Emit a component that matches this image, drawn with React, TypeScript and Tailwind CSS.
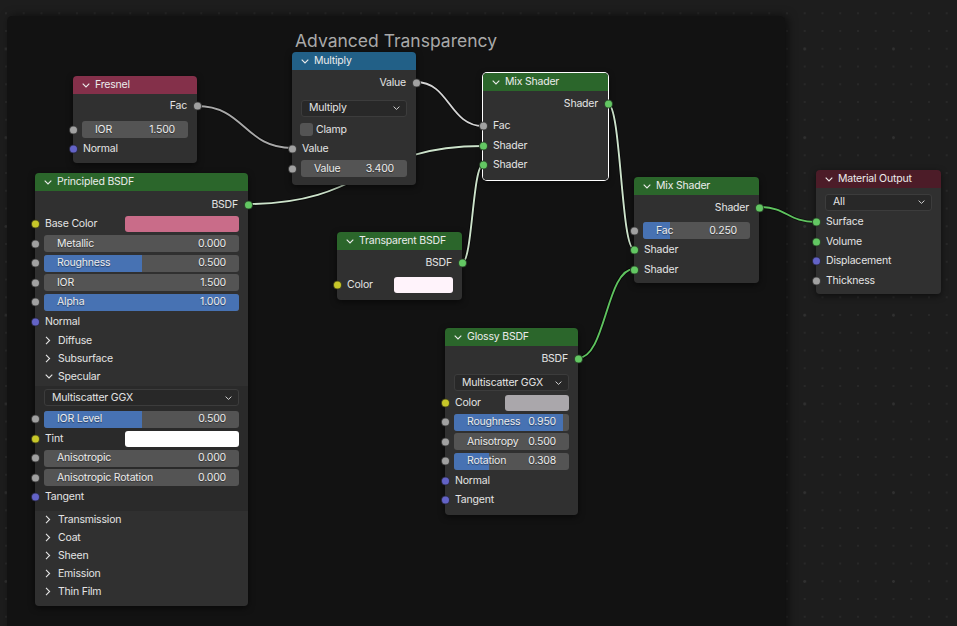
import { ReactNode } from 'react'

type Sock = 'gray' | 'green' | 'yellow' | 'purple'

const sockBg: Record<Sock, string> = {
  gray: 'bg-[#a1a1a1]',
  green: 'bg-[#63c763]',
  yellow: 'bg-[#c7c729]',
  purple: 'bg-[#6363c7]',
}

function Socket({ c, side }: { c: Sock; side: 'l' | 'r' }) {
  return (
    <span
      className={`absolute top-1/2 size-[9px] -translate-y-1/2 rounded-full border border-[#161616]/70 ${sockBg[c]} ${
        side === 'l' ? 'left-[-4.5px]' : 'right-[-4.5px]'
      }`}
    />
  )
}

function ChevDown({ className = '' }: { className?: string }) {
  return (
    <svg width="8" height="5" viewBox="0 0 8 5" className={className}>
      <path d="M0.7 0.7 L4 4 L7.3 0.7" fill="none" stroke="currentColor" strokeWidth="1.1" />
    </svg>
  )
}

function ChevRight() {
  return (
    <svg width="6" height="9" viewBox="0 0 6 9">
      <path d="M1 0.8 L4.6 4.5 L1 8.2" fill="none" stroke="currentColor" strokeWidth="1.1" />
    </svg>
  )
}

function Node({
  className,
  head,
  title,
  selected,
  children,
}: {
  className: string
  head: string
  title: string
  selected?: boolean
  children: ReactNode
}) {
  return (
    <div
      className={`absolute rounded-[4px] shadow-[0_2px_6px_rgba(0,0,0,0.55)] ${selected ? 'ring-1 ring-white' : ''} ${className}`}
    >
      <div className={`flex h-[18px] items-center rounded-t-[4px] pl-[9px] text-[#ececec] ${head}`}>
        <ChevDown />
        <span className="ml-[5px]">{title}</span>
      </div>
      <div className="rounded-b-[4px] bg-[#303030]">{children}</div>
    </div>
  )
}

function Out({ label, c }: { label: string; c: Sock }) {
  return (
    <div className="relative flex h-5 items-center justify-end pr-[10px]">
      <span>{label}</span>
      <Socket c={c} side="r" />
    </div>
  )
}

function In({ label, c }: { label: string; c: Sock }) {
  return (
    <div className="relative flex h-[19.5px] items-center pl-[10px]">
      <span>{label}</span>
      <Socket c={c} side="l" />
    </div>
  )
}

function Field({ label, value, fill = 0, c = 'gray' }: { label: string; value: string; fill?: number; c?: Sock }) {
  return (
    <div className="relative flex h-[19.5px] items-center pl-[9px] pr-[9px]">
      <div className="relative flex h-[17px] flex-1 items-center justify-between overflow-hidden rounded-[3px] bg-[#545454] px-[13px] text-[#ececec] [text-shadow:0_1px_1px_rgba(0,0,0,0.45)]">
        {fill > 0 && <div className="absolute inset-y-0 left-0 bg-[#4772b3]" style={{ width: `${fill * 100}%` }} />}
        <span className="relative">{label}</span>
        <span className="relative">{value}</span>
      </div>
      <Socket c={c} side="l" />
    </div>
  )
}

function ColorRow({ label, swatch, sw, c = 'yellow' }: { label: string; swatch: string; sw: string; c?: Sock }) {
  return (
    <div className="relative flex h-[19.5px] items-center justify-between pl-[10px] pr-[9px]">
      <span>{label}</span>
      <div className={`h-[16px] rounded-[3px] ${swatch} ${sw}`} />
      <Socket c={c} side="l" />
    </div>
  )
}

function Menu({ label, h }: { label: string; h: string }) {
  return (
    <div className={`flex items-center pl-[9px] pr-[9px] ${h}`}>
      <div className="flex h-[17px] flex-1 items-center justify-between rounded-[3px] border border-[#3c3c3c] bg-[#282828] pl-[7px] pr-[6px]">
        <span>{label}</span>
        <svg width="7" height="4" viewBox="0 0 7 4">
          <path d="M0.6 0.6 L3.5 3.4 L6.4 0.6" fill="none" stroke="#d0d0d0" strokeWidth="1" />
        </svg>
      </div>
    </div>
  )
}

function Panel({ label, open }: { label: string; open?: boolean }) {
  return (
    <div className="flex h-[18px] items-center pl-[10px]">
      <span className="flex w-[13px] items-center">{open ? <ChevDown /> : <ChevRight />}</span>
      <span>{label}</span>
    </div>
  )
}

function wire(x1: number, y1: number, x2: number, y2: number) {
  const h = Math.abs(x2 - x1) * 0.5
  return `M${x1} ${y1} C${x1 + h} ${y1} ${x2 - h} ${y2} ${x2} ${y2}`
}

const wires = [
  { d: wire(197, 106, 292, 148), c: '#a8a8a8' },
  { d: wire(416, 82, 483, 126), c: '#d4d4d4' },
  { d: wire(248, 204, 483, 146), c: '#cde3cb' },
  { d: wire(462, 263, 483, 165), c: '#cde3cb' },
  { d: wire(608, 104, 634, 249), c: '#cde3cb' },
  { d: wire(578, 358, 634, 269), c: '#5fc35f' },
  { d: wire(759, 207, 816, 222), c: '#5fc35f' },
]

export default function App() {
  return (
    <div className="relative h-[626px] w-[957px] overflow-hidden bg-[#1d1d1d] bg-[radial-gradient(circle,#303030_1.1px,transparent_1.6px),radial-gradient(circle,#282828_0.7px,transparent_1.1px)] bg-[length:88.75px_88.75px,17.75px_17.75px] bg-[position:-38.4px_4.6px,-2.9px_4.4px] font-['Inter','Noto_Sans',sans-serif] text-[10.5px] tracking-[-0.2px] text-[#e4e4e4]">
      {/* frame */}
      <div className="absolute left-[7px] top-[16px] h-[640px] w-[778px] rounded-[5px] bg-[#121212] shadow-[3px_0_10px_rgba(0,0,0,0.55)]">
        <div className="pt-[14px] text-center text-[17.5px] leading-[22px] tracking-normal text-[#a9a9a9]">Advanced Transparency</div>
      </div>

      <svg className="absolute inset-0" width="957" height="626">
        {wires.map((w, i) => (
          <g key={i}>
            <path d={w.d} fill="none" stroke="#000" strokeOpacity="0.55" strokeWidth="3.6" />
            <path d={w.d} fill="none" stroke={w.c} strokeWidth="1.9" />
          </g>
        ))}
      </svg>

      <Node className="left-[73px] top-[76px] w-[124px]" head="bg-[#84304a]" title="Fresnel">
        <div className="pb-[3.5px] pt-[2px]">
          <Out label="Fac" c="gray" />
          <div className="h-[4px]" />
          <Field label="IOR" value="1.500" />
          <In label="Normal" c="purple" />
        </div>
      </Node>

      <Node className="left-[292px] top-[52px] w-[124px]" head="bg-[#226087]" title="Multiply">
        <div className="pb-[6px] pt-[2.5px]">
          <Out label="Value" c="gray" />
          <Menu label="Multiply" h="mt-[4px] h-[23px]" />
          <div className="flex h-5 items-center pl-[8px]">
            <span className="size-[13px] rounded-[3px] bg-[#545454]" />
            <span className="ml-[3px]">Clamp</span>
          </div>
          <In label="Value" c="gray" />
          <Field label="Value" value="3.400" />
        </div>
      </Node>

      <Node className="left-[483px] top-[73px] w-[125px]" head="bg-[#2b662b] h-[18.5px]" title="Mix Shader" selected>
        <div className="pb-[5px] pt-[3px]">
          <Out label="Shader" c="green" />
          <div className="h-[2.5px]" />
          <In label="Fac" c="gray" />
          <In label="Shader" c="green" />
          <In label="Shader" c="green" />
        </div>
      </Node>

      <Node className="left-[634px] top-[177px] w-[125px]" head="bg-[#2b662b]" title="Mix Shader">
        <div className="pb-[4px] pt-[2.5px]">
          <Out label="Shader" c="green" />
          <div className="h-[3.25px]" />
          <Field label="Fac" value="0.250" fill={0.25} />
          <In label="Shader" c="green" />
          <In label="Shader" c="green" />
        </div>
      </Node>

      <Node className="left-[816px] top-[170px] w-[125px]" head="bg-[#4c1c28]" title="Material Output">
        <div className="pb-[3px] pt-[3.5px]">
          <Menu label="All" h="h-[21px]" />
          <In label="Surface" c="green" />
          <In label="Volume" c="green" />
          <In label="Displacement" c="purple" />
          <In label="Thickness" c="gray" />
        </div>
      </Node>

      <Node className="left-[35px] top-[173px] w-[213px]" head="bg-[#2b662b]" title="Principled BSDF">
        <div className="pb-[5.5px] pt-[3.5px]">
          <Out label="BSDF" c="green" />
          <ColorRow label="Base Color" swatch="bg-[#c96c89]" sw="w-[114px]" />
          <Field label="Metallic" value="0.000" />
          <Field label="Roughness" value="0.500" fill={0.5} />
          <Field label="IOR" value="1.500" />
          <Field label="Alpha" value="1.000" fill={1} />
          <In label="Normal" c="purple" />
          <Panel label="Diffuse" />
          <Panel label="Subsurface" />
          <Panel label="Specular" open />
          <div className="bg-[#2a2a2a] pb-[3.5px]">
            <Menu label="Multiscatter GGX" h="h-[24px]" />
            <Field label="IOR Level" value="0.500" fill={0.5} />
            <ColorRow label="Tint" swatch="bg-white" sw="w-[114px]" />
            <Field label="Anisotropic" value="0.000" />
            <Field label="Anisotropic Rotation" value="0.000" />
            <In label="Tangent" c="purple" />
          </div>
          <Panel label="Transmission" />
          <Panel label="Coat" />
          <Panel label="Sheen" />
          <Panel label="Emission" />
          <Panel label="Thin Film" />
        </div>
      </Node>

      <Node className="left-[337px] top-[232px] w-[125px]" head="bg-[#2b662b] h-[18.5px]" title="Transparent BSDF">
        <div className="pb-[5.5px] pt-[3px]">
          <Out label="BSDF" c="green" />
          <div className="h-[2.25px]" />
          <ColorRow label="Color" swatch="bg-[#fff3fb]" sw="w-[59px]" />
        </div>
      </Node>

      <Node className="left-[445px] top-[328px] w-[133px]" head="bg-[#2b662b]" title="Glossy BSDF">
        <div className="pb-[5px] pt-[2.5px]">
          <Out label="BSDF" c="green" />
          <Menu label="Multiscatter GGX" h="mt-[3.5px] h-[21px]" />
          <ColorRow label="Color" swatch="bg-[#aaa7ab]" sw="w-[64px]" />
          <Field label="Roughness" value="0.950" fill={0.95} />
          <Field label="Anisotropy" value="0.500" />
          <Field label="Rotation" value="0.308" fill={0.308} />
          <In label="Normal" c="purple" />
          <In label="Tangent" c="purple" />
        </div>
      </Node>
    </div>
  )
}
